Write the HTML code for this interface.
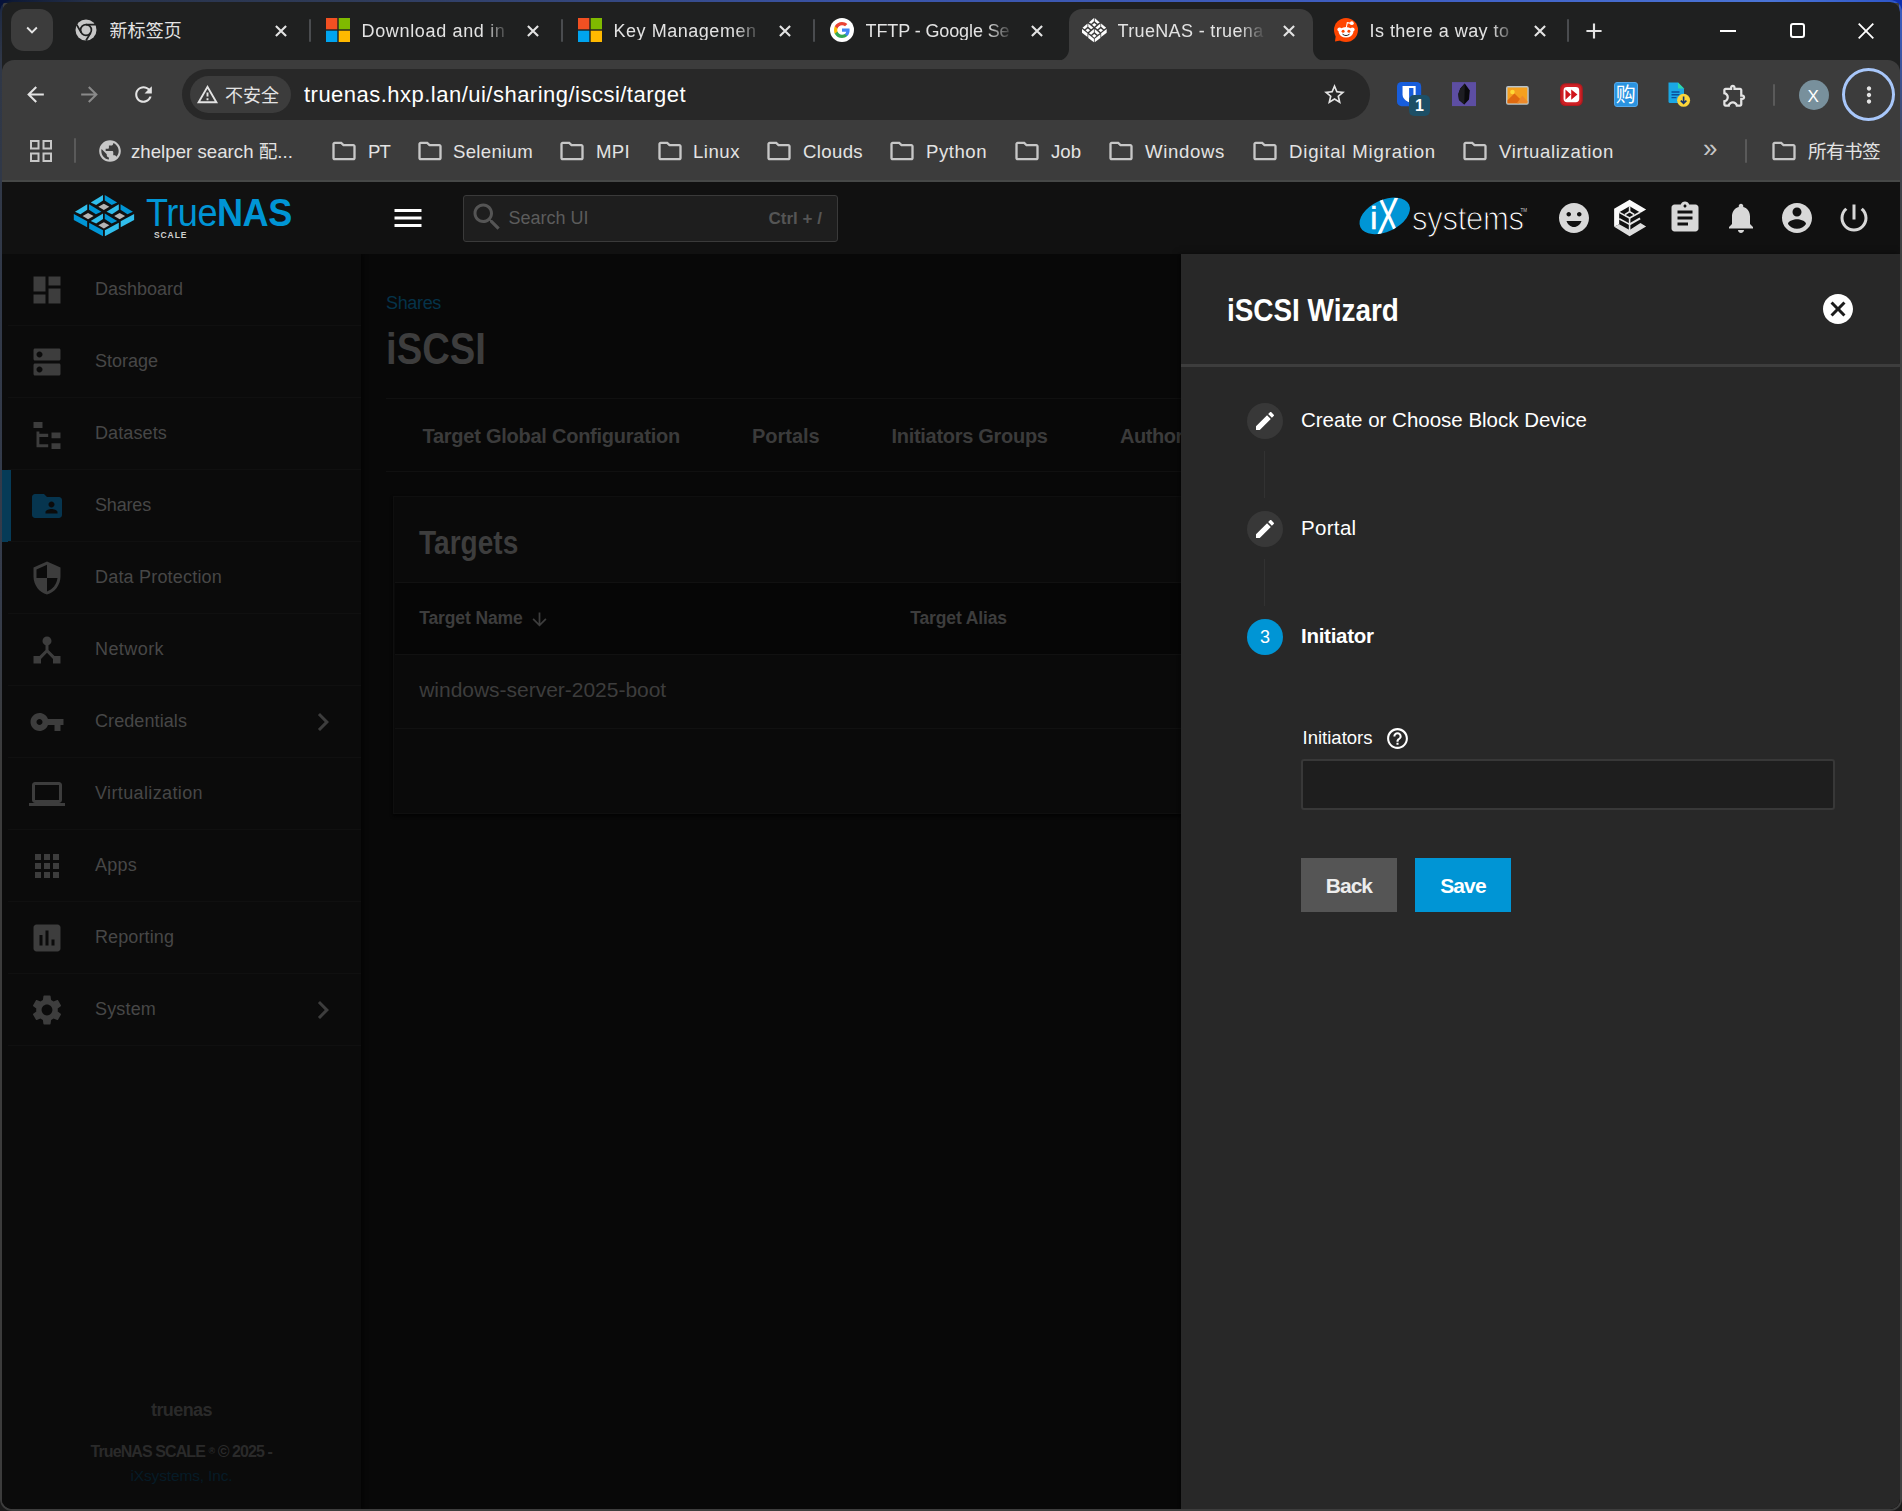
<!DOCTYPE html>
<html lang="zh-CN"><head><meta charset="utf-8"><title>TrueNAS - truenas</title>
<style>
*{box-sizing:border-box;margin:0;padding:0}
html,body{width:1902px;height:1511px;overflow:hidden}
html{background:#1a1a1a}
body{position:relative;font-family:"Liberation Sans","Noto Sans CJK SC",sans-serif;color:#e3e3e3}
.a,.i,.t{position:absolute}
.i{display:block;overflow:visible}
.t{white-space:nowrap;line-height:1;transform:translateY(-50%)}
body{background:linear-gradient(90deg,#06123a 0 50%,#0d2fb0 50% 100%) top/100% 24px no-repeat,#1a1a1a}
#desk{left:0;top:0;width:1902px;height:1511px;border-radius:12px;background:
 linear-gradient(90deg,#0a1633 0%,#27324a 5%,#2f3b58 18%,#3a54a8 45%,#3f5fc4 75%,#4a74d6 93%,#2d55c8 100%) top/100% 3px no-repeat,
 linear-gradient(180deg,#1b2742 0,#2f3747 60px,#353c4b 600px,#3c3c3c 760px,#3c3c3c 100%) left/3px 100% no-repeat,
 linear-gradient(180deg,#3a5cc2 0,#3b58b0 40px,#40434c 160px,#404040 260px,#404040 100%) right/3px 100% no-repeat,
 #3d3d3d}
#win{left:2px;top:2px;width:1898px;height:1507px;border-radius:10px;background:#1f2020;overflow:hidden}
/* chrome ui */
.ct{font-size:18px;color:#e3e3e3}
.bm{font-size:18.6px;color:#e3e3e3}
/* page */
.nav{font-size:18px;color:#474747}
.hd{font-weight:bold;transform-origin:0 50%}
</style></head><body>
<div class="a" id="desk"></div>
<div class="a" id="win">

<div class="a" id="s" style="left:-2px;top:-2px;width:1902px;height:1511px">
<div class="a" style="left:11px;top:9px;width:42px;height:42px;border-radius:13px;background:#3c3c3c"></div>
<svg class="i" style="left:21.0px;top:19.0px;width:22px;height:22px;" viewBox="0 0 24 24"><path fill="#e3e3e3" d="M7.41 8.59L12 13.17l4.59-4.58L18 10l-6 6-6-6 1.41-1.41z"/></svg>
<div class="a" style="left:2px;top:60px;width:1898px;height:121px;background:#3c3c3c;border-radius:12px 12px 0 0"></div>
<div class="a" style="left:1069px;top:9px;width:244px;height:52px;background:#3c3c3c;border-radius:13px 13px 0 0"></div>
<svg class="i" style="left:1057px;top:49px;width:12px;height:12px" viewBox="0 0 12 12"><path fill="#3c3c3c" d="M12 0v12H0C6.600 12 12 6.600 12 0z"/></svg>
<svg class="i" style="left:1313px;top:49px;width:12px;height:12px" viewBox="0 0 12 12"><path fill="#3c3c3c" d="M0 0v12h12C5.400 12 0 6.600 0 0z"/></svg>
<svg class="i" style="left:74.0px;top:18px;width:24px;height:24px" viewBox="0 0 24 24"><circle cx="12" cy="12" r="10.500" fill="#c7c7c7"/><circle cx="12" cy="12" r="5.400" fill="none" stroke="#1f2020" stroke-width="1.700"/><path d="M12 6.600H21.500M7.300 14.700 2.700 6.800M16.700 14.700 12 22.500" stroke="#1f2020" stroke-width="1.700" fill="none"/></svg>
<div class="t ct" style="left:109.5px;top:31px;width:148px;overflow:hidden;;letter-spacing:0.125px;">新标签页</div>
<svg class="i" style="left:275.0px;top:24.500px;width:12px;height:12px" viewBox="0 0 12 12"><path d="M.900.900 11.100 11.100M11.100.900.900 11.100" stroke="#e3e3e3" stroke-width="2.100" fill="none"/></svg>
<svg class="i" style="left:326.0px;top:18px;width:24px;height:24px" viewBox="0 0 24 24"><rect x="0" y="0" width="11.300" height="11.300" fill="#f25022"/><rect x="12.700" y="0" width="11.300" height="11.300" fill="#7fba00"/><rect x="0" y="12.700" width="11.300" height="11.300" fill="#00a4ef"/><rect x="12.700" y="12.700" width="11.300" height="11.300" fill="#ffb900"/></svg>
<div class="t ct" style="left:361.5px;top:31px;width:148px;overflow:hidden;-webkit-mask-image:linear-gradient(90deg,#000 82%,transparent 100%);mask-image:linear-gradient(90deg,#000 82%,transparent 100%);;letter-spacing:0.659px;">Download and in</div>
<svg class="i" style="left:527.0px;top:24.500px;width:12px;height:12px" viewBox="0 0 12 12"><path d="M.900.900 11.100 11.100M11.100.900.900 11.100" stroke="#e3e3e3" stroke-width="2.100" fill="none"/></svg>
<svg class="i" style="left:578.0px;top:18px;width:24px;height:24px" viewBox="0 0 24 24"><rect x="0" y="0" width="11.300" height="11.300" fill="#f25022"/><rect x="12.700" y="0" width="11.300" height="11.300" fill="#7fba00"/><rect x="0" y="12.700" width="11.300" height="11.300" fill="#00a4ef"/><rect x="12.700" y="12.700" width="11.300" height="11.300" fill="#ffb900"/></svg>
<div class="t ct" style="left:613.5px;top:31px;width:148px;overflow:hidden;-webkit-mask-image:linear-gradient(90deg,#000 82%,transparent 100%);mask-image:linear-gradient(90deg,#000 82%,transparent 100%);;letter-spacing:0.531px;">Key Managemen</div>
<svg class="i" style="left:779.0px;top:24.500px;width:12px;height:12px" viewBox="0 0 12 12"><path d="M.900.900 11.100 11.100M11.100.900.900 11.100" stroke="#e3e3e3" stroke-width="2.100" fill="none"/></svg>
<svg class="i" style="left:830.0px;top:18px;width:24px;height:24px" viewBox="0 0 24 24"><circle cx="12" cy="12" r="12" fill="#fff"/><path fill="#4285f4" d="M19.600 12.200c0-.600-.050-1.100-.150-1.600H12v3.100h4.300c-.200 1-.750 1.850-1.600 2.400v2h2.600c1.500-1.400 2.300-3.450 2.300-5.900z"/><path fill="#34a853" d="M12 20c2.150 0 3.950-.700 5.300-1.900l-2.600-2c-.700.480-1.600.770-2.700.770-2.100 0-3.850-1.400-4.500-3.300H4.800v2.070C6.100 18.250 8.850 20 12 20z"/><path fill="#fbbc05" d="M7.500 13.570c-.160-.480-.250-1-.250-1.570s.090-1.090.250-1.570V8.360H4.800C4.300 9.450 4 10.700 4 12s.300 2.550.800 3.640l2.700-2.070z"/><path fill="#ea4335" d="M12 7.130c1.170 0 2.220.400 3.050 1.200l2.300-2.300C15.950 4.750 14.150 4 12 4 8.850 4 6.100 5.750 4.800 8.360l2.700 2.070c.650-1.900 2.400-3.300 4.500-3.300z"/></svg>
<div class="t ct" style="left:865.5px;top:31px;width:148px;overflow:hidden;-webkit-mask-image:linear-gradient(90deg,#000 82%,transparent 100%);mask-image:linear-gradient(90deg,#000 82%,transparent 100%);;letter-spacing:-0.108px;">TFTP - Google Se</div>
<svg class="i" style="left:1031.0px;top:24.500px;width:12px;height:12px" viewBox="0 0 12 12"><path d="M.900.900 11.100 11.100M11.100.900.900 11.100" stroke="#e3e3e3" stroke-width="2.100" fill="none"/></svg>
<svg class="i" style="left:1081.600px;top:17.800px;width:24.700px;height:24.300px" viewBox="185 168 1435 980" preserveAspectRatio="none"><polygon fill="#fff" points="588,345 880,168 880,298 718,402"/><polygon fill="#fff" points="922,168 1216,345 1086,402 922,298"/><polygon fill="#fff" points="900,372 1030,445 900,520 770,445"/><polygon fill="#fff" points="213,565 505,388 505,518 343,622"/><polygon fill="#fff" points="547,388 841,565 711,622 547,518"/><polygon fill="#fff" points="525,592 655,665 525,740 395,665"/><polygon fill="#fff" points="963,565 1255,388 1255,518 1093,622"/><polygon fill="#fff" points="1297,388 1591,565 1461,622 1297,518"/><polygon fill="#fff" points="1275,592 1405,665 1275,740 1145,665"/><polygon fill="#fff" points="588,785 880,608 880,738 718,842"/><polygon fill="#fff" points="922,608 1216,785 1086,842 922,738"/><polygon fill="#fff" points="900,812 1030,885 900,960 770,885"/><polygon fill="#fff" points="185,615 503,788 503,935 185,758"/><polygon fill="#fff" points="550,825 880,1003 880,1148 550,970"/><polygon fill="#fff" points="924,1003 1255,825 1255,970 924,1148"/><polygon fill="#fff" points="1300,788 1620,615 1620,758 1300,935"/></svg>
<div class="t ct" style="left:1117.5px;top:31px;width:148px;overflow:hidden;-webkit-mask-image:linear-gradient(90deg,#000 82%,transparent 100%);mask-image:linear-gradient(90deg,#000 82%,transparent 100%);;letter-spacing:0.351px;">TrueNAS - truena</div>
<svg class="i" style="left:1283.0px;top:24.500px;width:12px;height:12px" viewBox="0 0 12 12"><path d="M.900.900 11.100 11.100M11.100.900.900 11.100" stroke="#e3e3e3" stroke-width="2.100" fill="none"/></svg>
<svg class="i" style="left:1334.0px;top:18px;width:24px;height:24px" viewBox="0 0 24 24"><circle cx="12" cy="12" r="12" fill="#ff4500"/><path fill="#ff4500" d="M2 16 1 23.500 9 22z"/><circle cx="17.800" cy="5.200" r="1.900" fill="#fff"/><path d="M12.300 9.500 13.300 4.600 17.500 5.400" stroke="#fff" stroke-width="1.100" fill="none"/><circle cx="5.600" cy="11.600" r="2.200" fill="#fff"/><circle cx="18.400" cy="11.600" r="2.200" fill="#fff"/><ellipse cx="12" cy="14.300" rx="7.200" ry="5.300" fill="#fff"/><circle cx="9.100" cy="13.300" r="1.500" fill="#ff4500"/><circle cx="14.900" cy="13.300" r="1.500" fill="#ff4500"/><path d="M8.800 16.400c1.900 1.600 4.500 1.600 6.400 0" stroke="#222" stroke-width="1" fill="none" stroke-linecap="round"/></svg>
<div class="t ct" style="left:1369.5px;top:31px;width:148px;overflow:hidden;-webkit-mask-image:linear-gradient(90deg,#000 82%,transparent 100%);mask-image:linear-gradient(90deg,#000 82%,transparent 100%);;letter-spacing:0.466px;">Is there a way to</div>
<svg class="i" style="left:1533.5px;top:24.500px;width:12px;height:12px" viewBox="0 0 12 12"><path d="M.900.900 11.100 11.100M11.100.900.900 11.100" stroke="#e3e3e3" stroke-width="2.100" fill="none"/></svg>
<div class="a" style="left:308.5px;top:19px;width:2px;height:23px;background:#4a4c4f;border-radius:1px"></div>
<div class="a" style="left:560.5px;top:19px;width:2px;height:23px;background:#4a4c4f;border-radius:1px"></div>
<div class="a" style="left:812.5px;top:19px;width:2px;height:23px;background:#4a4c4f;border-radius:1px"></div>
<div class="a" style="left:1567px;top:19px;width:2px;height:23px;background:#4a4c4f;border-radius:1px"></div>
<svg class="i" style="left:1581.0px;top:17.5px;width:26px;height:26px;" viewBox="0 0 24 24"><path fill="#e3e3e3" d="M19 13h-6v6h-2v-6H5v-2h6V5h2v6h6v2z"/></svg>
<div class="a" style="left:1720px;top:30px;width:16px;height:2px;background:#fff"></div>
<div class="a" style="left:1790px;top:23px;width:15px;height:15px;border:2px solid #fff;border-radius:3px"></div>
<svg class="i" style="left:1858px;top:23px;width:16px;height:16px" viewBox="0 0 16 16"><path d="M.700.700 15.300 15.300M15.300.700.700 15.300" stroke="#fff" stroke-width="1.800"/></svg>
<svg class="i" style="left:22.5px;top:82.0px;width:25px;height:25px;" viewBox="0 0 24 24"><path fill="#e3e3e3" d="M20 11H7.830l5.590-5.590L12 4l-8 8 8 8 1.410-1.410L7.830 13H20v-2z"/></svg>
<svg class="i" style="left:76.5px;top:82.0px;width:25px;height:25px;" viewBox="0 0 24 24"><path fill="#8a8a8a" d="M12 4l-1.410 1.410L16.170 11H4v2h12.170l-5.580 5.590L12 20l8-8z"/></svg>
<svg class="i" style="left:130.5px;top:82.0px;width:25px;height:25px;" viewBox="0 0 24 24"><path fill="#e3e3e3" d="M17.650 6.350C16.200 4.900 14.210 4 12 4c-4.420 0-7.990 3.580-7.990 8s3.570 8 7.990 8c3.730 0 6.840-2.550 7.730-6h-2.080c-.820 2.330-3.040 4-5.650 4-3.310 0-6-2.690-6-6s2.690-6 6-6c1.660 0 3.140.690 4.220 1.780L13 11h7V4l-2.350 2.350z"/></svg>
<div class="a" style="left:182px;top:69px;width:1188px;height:51px;border-radius:26px;background:#282828"></div>
<div class="a" style="left:190px;top:76px;width:101px;height:37px;border-radius:19px;background:#3c3c3c"></div>
<svg class="i" style="left:195.8px;top:83.0px;width:23px;height:23px;" viewBox="0 0 24 24"><path fill="#e3e3e3" d="M12 5.990L19.530 19H4.470L12 5.990M12 2L1 21h22L12 2zm1 14h-2v2h2v-2zm0-6h-2v4h2v-4z"/></svg>
<div class="t " style="left:225px;top:96.3px;font-size:18px;color:#e3e3e3">不安全</div>
<div class="t " style="left:304px;top:94.5px;font-size:22px;color:#fff;;letter-spacing:0.482px;">truenas.hxp.lan/ui/sharing/iscsi/target</div>
<svg class="i" style="left:1321.5px;top:82.0px;width:25px;height:25px;" viewBox="0 0 24 24"><path fill="#e3e3e3" d="M22 9.240l-7.190-.620L12 2 9.190 8.630 2 9.240l5.460 4.730L5.820 21 12 17.270 18.180 21l-1.630-7.030L22 9.240zM12 15.400l-3.760 2.270 1-4.280-3.320-2.880 4.380-.380L12 6.100l1.710 4.040 4.380.380-3.320 2.880 1 4.280L12 15.400z"/></svg>
<svg class="i" style="left:1397.300px;top:82.400px;width:24.200px;height:24.200px" viewBox="0 0 24 24"><rect x="0" y="0" width="24" height="24" rx="4.500" fill="#175ddc"/><path fill="#fff" d="M5.500 4h13v8.500c0 3.800-3.200 6.300-6.500 7.700-3.300-1.400-6.500-3.900-6.500-7.700z"/><path fill="#175ddc" d="M12 6h4.300v6.500c0 2.300-2 4-4.300 5.200z"/></svg>
<div class="a" style="left:1409.300px;top:94.500px;width:21px;height:21px;border-radius:5px;background:#1d4f66"></div>
<div class="t " style="left:1415px;top:105.5px;font-size:16px;font-weight:bold;color:#fff">1</div>
<svg class="i" style="left:1451.500px;top:82.400px;width:24px;height:24.200px" viewBox="0 0 24 24"><rect width="24" height="24" fill="#5d4ea3"/><path fill="#0a0a0d" d="M12.800 1.500 17.800 8.500 17 17.500 12.300 22.500 7 17.800 6.300 12 8.300 6.500z"/><path fill="#1d1d22" d="M12.800 1.500 12.300 22.500 7 17.800 6.300 12 8.300 6.500z"/></svg>
<svg class="i" style="left:1506px;top:85.500px;width:22.800px;height:18.800px" viewBox="0 0 23 19"><rect x="0" y="0" width="23" height="19" rx="2" fill="#b9c3ca"/><rect x="1.500" y="1.500" width="20" height="16" fill="#f5a01e"/><path fill="#e06a10" d="M1.500 17.500V14.500L8.500 7.500 15 14 13 17.500z"/><path fill="#ee8a2a" d="M11 17.500 16.500 9.500 21.500 15.500V17.500z"/><circle cx="6.500" cy="6" r="2.300" fill="#fdd835"/></svg>
<svg class="i" style="left:1560.200px;top:82.800px;width:22.800px;height:23.200px" viewBox="0 0 23 23"><rect width="23" height="23" rx="5.500" fill="#b01a1e"/><rect x="1.300" y="1.300" width="20.400" height="20.400" rx="4.500" fill="#cf2025"/><rect x="3.600" y="3.800" width="15.800" height="15.400" rx="3.500" fill="#fff"/><path fill="#d0161c" d="M5.500 6.300 11 11.500 5.500 16.700zM11.300 6.300 17.600 11.500 11.300 16.700z"/></svg>
<div class="a" style="left:1613.600px;top:82.400px;width:24.200px;height:24.200px;border-radius:3px;background:#2a93e0;border:1px solid #55a8ea"></div>
<div class="t " style="left:1615.7px;top:94.8px;font-size:20px;color:#fff">购</div>
<svg class="i" style="left:1667px;top:81px;width:26px;height:28px" viewBox="0 0 26 28"><path fill="#1aa7e4" d="M1.500 1.500h9.500l6 6v13a1.500 1.500 0 0 1-1.500 1.500H3a1.500 1.500 0 0 1-1.500-1.500z"/><path fill="#2fd8a6" d="M11 1.500l6 6h-6z"/><path stroke="#0b4f9a" stroke-width="1.400" d="M4.500 11h8M4.500 13.800h8M4.500 16.600h5"/><circle cx="16.600" cy="19.300" r="6.500" fill="#fbd53a"/><path stroke="#12336e" stroke-width="1.600" fill="none" d="M16.600 15.600v6.500M13.800 19.600l2.800 2.800 2.800-2.800"/></svg>
<svg class="i" style="left:1721.0px;top:81.5px;width:27px;height:27px;" viewBox="0 0 24 24"><path fill="#e3e3e3" d="M10.500 4.500c.280 0 .500.220.500.500v2h6v6h2c.280 0 .500.220.500.500s-.220.500-.500.500h-2v6h-2.120c-.680-1.750-2.390-3-4.380-3s-3.700 1.250-4.380 3H4v-2.120c1.750-.680 3-2.390 3-4.380 0-1.990-1.240-3.700-2.990-4.380L4 7h6V5c0-.280.220-.500.500-.500m0-2C9.120 2.500 8 3.620 8 5H4c-1.100 0-1.990.900-1.990 2v3.800h.290c1.490 0 2.700 1.210 2.700 2.700s-1.210 2.700-2.700 2.700H2V20c0 1.100.900 2 2 2h3.800v-.300c0-1.490 1.210-2.700 2.700-2.700s2.700 1.210 2.700 2.700v.300H17c1.100 0 2-.900 2-2v-4c1.380 0 2.500-1.120 2.500-2.500S20.380 11 19 11V7c0-1.100-.900-2-2-2h-4c0-1.380-1.120-2.500-2.500-2.500z"/></svg>
<div class="a" style="left:1772.500px;top:84px;width:2px;height:22px;background:#5a5a5a;border-radius:1px"></div>
<div class="a" style="left:1799px;top:80px;width:30px;height:30px;border-radius:15px;background:#78909c"></div>
<div class="t " style="left:1807.5px;top:95.5px;font-size:17px;color:#fff">X</div>
<div class="a" style="left:1842px;top:68px;width:53px;height:53px;border-radius:27px;border:3px solid #a8c7fa"></div>
<svg class="i" style="left:1855.5px;top:81.5px;width:26px;height:26px;" viewBox="0 0 24 24"><path fill="#e3e3e3" d="M12 8c1.100 0 2-.900 2-2s-.900-2-2-2-2 .900-2 2 .900 2 2 2zm0 2c-1.100 0-2 .900-2 2s.900 2 2 2 2-.900 2-2-.900-2-2-2zm0 6c-1.100 0-2 .900-2 2s.900 2 2 2 2-.900 2-2-.900-2-2-2z"/></svg>
<svg class="i" style="left:30px;top:140px;width:22px;height:22px" viewBox="0 0 22 22"><g fill="none" stroke="#c7c7c7" stroke-width="2"><rect x="1" y="1" width="7.500" height="7.500"/><rect x="13.500" y="1" width="7.500" height="7.500"/><rect x="1" y="13.500" width="7.500" height="7.500"/><rect x="13.500" y="13.500" width="7.500" height="7.500"/></g></svg>
<div class="a" style="left:74px;top:138px;width:2px;height:25px;background:#5a5a5a;border-radius:1px"></div>
<svg class="i" style="left:97.0px;top:138.0px;width:26px;height:26px;" viewBox="0 0 24 24"><path fill="#c7c7c7" d="M12 2C6.480 2 2 6.480 2 12s4.480 10 10 10 10-4.480 10-10S17.520 2 12 2zm-1 17.930c-3.950-.490-7-3.850-7-7.930 0-.620.080-1.210.210-1.790L9 15v1c0 1.100.900 2 2 2v1.930zm6.900-2.540c-.260-.810-1-1.390-1.900-1.390h-1v-3c0-.550-.450-1-1-1H8v-2h2c.550 0 1-.450 1-1V7h2c1.100 0 2-.900 2-2v-.410c2.930 1.190 5 4.060 5 7.410 0 2.080-.800 3.970-2.100 5.390z"/></svg>
<div class="t bm" style="left:131px;top:151.5px;;letter-spacing:0.041px;">zhelper search 配...</div>
<svg class="i" style="left:330.0px;top:136.5px;width:28px;height:28px;" viewBox="0 0 24 24"><path fill="#c7c7c7" d="M9.170 6l2 2H20v10H4V6h5.170M10 4H4c-1.100 0-1.990.900-1.990 2L2 18c0 1.100.900 2 2 2h16c1.100 0 2-.900 2-2V8c0-1.100-.900-2-2-2h-8l-2-2z"/></svg>
<div class="t bm" style="left:368px;top:151.5px;;letter-spacing:-0.883px;">PT</div>
<svg class="i" style="left:416.0px;top:136.5px;width:28px;height:28px;" viewBox="0 0 24 24"><path fill="#c7c7c7" d="M9.170 6l2 2H20v10H4V6h5.170M10 4H4c-1.100 0-1.990.900-1.990 2L2 18c0 1.100.900 2 2 2h16c1.100 0 2-.900 2-2V8c0-1.100-.900-2-2-2h-8l-2-2z"/></svg>
<div class="t bm" style="left:453px;top:151.5px;;letter-spacing:0.309px;">Selenium</div>
<svg class="i" style="left:558.0px;top:136.5px;width:28px;height:28px;" viewBox="0 0 24 24"><path fill="#c7c7c7" d="M9.170 6l2 2H20v10H4V6h5.170M10 4H4c-1.100 0-1.990.900-1.990 2L2 18c0 1.100.900 2 2 2h16c1.100 0 2-.900 2-2V8c0-1.100-.900-2-2-2h-8l-2-2z"/></svg>
<div class="t bm" style="left:596px;top:151.5px;;letter-spacing:0.312px;">MPI</div>
<svg class="i" style="left:656.0px;top:136.5px;width:28px;height:28px;" viewBox="0 0 24 24"><path fill="#c7c7c7" d="M9.170 6l2 2H20v10H4V6h5.170M10 4H4c-1.100 0-1.990.900-1.990 2L2 18c0 1.100.900 2 2 2h16c1.100 0 2-.900 2-2V8c0-1.100-.900-2-2-2h-8l-2-2z"/></svg>
<div class="t bm" style="left:693px;top:151.5px;;letter-spacing:0.509px;">Linux</div>
<svg class="i" style="left:764.7px;top:136.5px;width:28px;height:28px;" viewBox="0 0 24 24"><path fill="#c7c7c7" d="M9.170 6l2 2H20v10H4V6h5.170M10 4H4c-1.100 0-1.990.900-1.990 2L2 18c0 1.100.900 2 2 2h16c1.100 0 2-.900 2-2V8c0-1.100-.900-2-2-2h-8l-2-2z"/></svg>
<div class="t bm" style="left:803px;top:151.5px;;letter-spacing:0.352px;">Clouds</div>
<svg class="i" style="left:888.0px;top:136.5px;width:28px;height:28px;" viewBox="0 0 24 24"><path fill="#c7c7c7" d="M9.170 6l2 2H20v10H4V6h5.170M10 4H4c-1.100 0-1.990.900-1.990 2L2 18c0 1.100.900 2 2 2h16c1.100 0 2-.900 2-2V8c0-1.100-.900-2-2-2h-8l-2-2z"/></svg>
<div class="t bm" style="left:926px;top:151.5px;;letter-spacing:0.518px;">Python</div>
<svg class="i" style="left:1013.0px;top:136.5px;width:28px;height:28px;" viewBox="0 0 24 24"><path fill="#c7c7c7" d="M9.170 6l2 2H20v10H4V6h5.170M10 4H4c-1.100 0-1.990.900-1.990 2L2 18c0 1.100.900 2 2 2h16c1.100 0 2-.900 2-2V8c0-1.100-.900-2-2-2h-8l-2-2z"/></svg>
<div class="t bm" style="left:1051px;top:151.5px;;letter-spacing:0.005px;">Job</div>
<svg class="i" style="left:1107.0px;top:136.5px;width:28px;height:28px;" viewBox="0 0 24 24"><path fill="#c7c7c7" d="M9.170 6l2 2H20v10H4V6h5.170M10 4H4c-1.100 0-1.990.900-1.990 2L2 18c0 1.100.900 2 2 2h16c1.100 0 2-.900 2-2V8c0-1.100-.900-2-2-2h-8l-2-2z"/></svg>
<div class="t bm" style="left:1145px;top:151.5px;;letter-spacing:0.652px;">Windows</div>
<svg class="i" style="left:1251.0px;top:136.5px;width:28px;height:28px;" viewBox="0 0 24 24"><path fill="#c7c7c7" d="M9.170 6l2 2H20v10H4V6h5.170M10 4H4c-1.100 0-1.990.900-1.990 2L2 18c0 1.100.900 2 2 2h16c1.100 0 2-.900 2-2V8c0-1.100-.900-2-2-2h-8l-2-2z"/></svg>
<div class="t bm" style="left:1289px;top:151.5px;;letter-spacing:0.805px;">Digital Migration</div>
<svg class="i" style="left:1461.0px;top:136.5px;width:28px;height:28px;" viewBox="0 0 24 24"><path fill="#c7c7c7" d="M9.170 6l2 2H20v10H4V6h5.170M10 4H4c-1.100 0-1.990.900-1.990 2L2 18c0 1.100.900 2 2 2h16c1.100 0 2-.900 2-2V8c0-1.100-.900-2-2-2h-8l-2-2z"/></svg>
<div class="t bm" style="left:1499px;top:151.5px;;letter-spacing:0.634px;">Virtualization</div>
<svg class="i" style="left:1770.0px;top:136.5px;width:28px;height:28px;" viewBox="0 0 24 24"><path fill="#c7c7c7" d="M9.170 6l2 2H20v10H4V6h5.170M10 4H4c-1.100 0-1.990.900-1.990 2L2 18c0 1.100.900 2 2 2h16c1.100 0 2-.900 2-2V8c0-1.100-.900-2-2-2h-8l-2-2z"/></svg>
<div class="t bm" style="left:1808px;top:151.5px;;letter-spacing:-0.598px;">所有书签</div>
<div class="t " style="left:1703px;top:148px;font-size:26px;color:#c7c7c7">»</div>
<div class="a" style="left:1745px;top:139px;width:2px;height:24px;background:#5a5a5a;border-radius:1px"></div>
<div class="a" style="left:2px;top:180px;width:1898px;height:2px;background:#464847"></div>
<div class="a" id="page" style="left:2px;top:182px;width:1898px;height:1327px;background:#080808;overflow:hidden">
<div class="a" id="pg" style="left:-2px;top:-182px;width:1902px;height:1511px">
<div class="a" style="left:2px;top:254px;width:359px;height:1256px;background:#0b0b0b;box-shadow:2px 0 4px #040404"></div>
<div class="a" style="left:2px;top:182px;width:1898px;height:72px;background:#111111"></div>
<svg class="i" style="left:29.0px;top:271.5px;width:36px;height:36px;" viewBox="0 0 24 24"><path fill="#3d3d3d" d="M3 13h8V3H3v10zm0 8h8v-6H3v6zm10 0h8V11h-8v10zm0-18v6h8V3h-8z"/></svg>
<div class="t nav" style="left:95px;top:289.0px;;letter-spacing:-0.007px;">Dashboard</div>
<div class="a" style="left:8px;top:325.0px;width:353px;height:1px;background:#101010"></div>
<svg class="i" style="left:29.0px;top:343.5px;width:36px;height:36px;" viewBox="0 0 24 24"><path fill="#3d3d3d" d="M20 13H4c-.55 0-1 .45-1 1v6c0 .55.45 1 1 1h16c.55 0 1-.45 1-1v-6c0-.55-.45-1-1-1zM7 19c-1.1 0-2-.9-2-2s.9-2 2-2 2 .9 2 2-.9 2-2 2zM20 3H4c-.55 0-1 .45-1 1v6c0 .55.45 1 1 1h16c.55 0 1-.45 1-1V4c0-.55-.45-1-1-1zM7 9c-1.1 0-2-.9-2-2s.9-2 2-2 2 .9 2 2-.9 2-2 2z"/></svg>
<div class="t nav" style="left:95px;top:361.0px;;letter-spacing:-0.007px;">Storage</div>
<div class="a" style="left:8px;top:397.0px;width:353px;height:1px;background:#101010"></div>
<svg class="i" style="left:29.0px;top:415.5px;width:36px;height:36px;" viewBox="0 0 24 24"><path fill="#3d3d3d" d="M3 4h6v4H3zM5 10.300h1.900v1.600h5.900v2.100H6.900v4.900h5.900v2H5zM15 11h6v3.800h-6zM15 18.100h6V22h-6z"/></svg>
<div class="t nav" style="left:95px;top:433.0px;;letter-spacing:0.119px;">Datasets</div>
<div class="a" style="left:8px;top:469.0px;width:353px;height:1px;background:#101010"></div>
<div class="a" style="left:2px;top:469.5px;width:9px;height:72px;background:#063b57"></div>
<svg class="i" style="left:29.0px;top:487.5px;width:36px;height:36px;" viewBox="0 0 24 24"><path fill="#06354f" d="M20 6h-8l-2-2H4c-1.1 0-1.99.9-1.99 2L2 18c0 1.1.9 2 2 2h16c1.1 0 2-.9 2-2V8c0-1.1-.9-2-2-2zm-5 3c1.1 0 2 .9 2 2s-.9 2-2 2-2-.9-2-2 .9-2 2-2zm4 8h-8v-1c0-1.33 2.67-2 4-2s4 .67 4 2v1z"/></svg>
<div class="t nav" style="left:95px;top:505.0px;;letter-spacing:-0.174px;">Shares</div>
<div class="a" style="left:8px;top:541.0px;width:353px;height:1px;background:#101010"></div>
<svg class="i" style="left:29.0px;top:559.5px;width:36px;height:36px;" viewBox="0 0 24 24"><path fill="#3d3d3d" d="M12 1L3 5v6c0 5.55 3.84 10.74 9 12 5.16-1.26 9-6.45 9-12V5l-9-4zm0 10.99h7c-.53 4.12-3.28 7.79-7 8.94V12H5V6.3l7-3.11v8.8z"/></svg>
<div class="t nav" style="left:95px;top:577.0px;;letter-spacing:0.195px;">Data Protection</div>
<div class="a" style="left:8px;top:613.0px;width:353px;height:1px;background:#101010"></div>
<svg class="i" style="left:29.0px;top:631.5px;width:36px;height:36px;" viewBox="0 0 24 24"><path fill="#3d3d3d" d="M17 16l-4-4V8.82C14.16 8.4 15 7.3 15 6c0-1.66-1.34-3-3-3S9 4.34 9 6c0 1.3.84 2.4 2 2.82V12l-4 4H3v5h5v-3.05l4-4.2 4 4.2V21h5v-5h-4z"/></svg>
<div class="t nav" style="left:95px;top:649.0px;;letter-spacing:0.426px;">Network</div>
<div class="a" style="left:8px;top:685.0px;width:353px;height:1px;background:#101010"></div>
<svg class="i" style="left:29.0px;top:703.5px;width:36px;height:36px;" viewBox="0 0 24 24"><path fill="#3d3d3d" d="M12.65 10C11.83 7.67 9.61 6 7 6c-3.31 0-6 2.69-6 6s2.69 6 6 6c2.61 0 4.83-1.67 5.65-4H17v4h4v-4h2v-4H12.65zM7 14c-1.1 0-2-.9-2-2s.9-2 2-2 2 .9 2 2-.9 2-2 2z"/></svg>
<div class="t nav" style="left:95px;top:721.0px;;letter-spacing:0.087px;">Credentials</div>
<svg class="i" style="left:305.0px;top:703.5px;width:36px;height:36px;" viewBox="0 0 24 24"><path fill="#3d3d3d" d="M10 6L8.59 7.41 13.17 12l-4.58 4.59L10 18l6-6z"/></svg>
<div class="a" style="left:8px;top:757.0px;width:353px;height:1px;background:#101010"></div>
<svg class="i" style="left:29.0px;top:775.5px;width:36px;height:36px;" viewBox="0 0 24 24"><path fill="#3d3d3d" d="M20 18c1.1 0 1.99-.9 1.99-2L22 6c0-1.1-.9-2-2-2H4c-1.1 0-2 .9-2 2v10c0 1.1.9 2 2 2H0v2h24v-2h-4zM4 6h16v10H4V6z"/></svg>
<div class="t nav" style="left:95px;top:793.0px;;letter-spacing:0.376px;">Virtualization</div>
<div class="a" style="left:8px;top:829.0px;width:353px;height:1px;background:#101010"></div>
<svg class="i" style="left:29.0px;top:847.5px;width:36px;height:36px;" viewBox="0 0 24 24"><path fill="#3d3d3d" d="M4 8h4V4H4v4zm6 12h4v-4h-4v4zm-6 0h4v-4H4v4zm0-6h4v-4H4v4zm6 0h4v-4h-4v4zm6-10v4h4V4h-4zm-6 4h4V4h-4v4zm6 6h4v-4h-4v4zm0 6h4v-4h-4v4z"/></svg>
<div class="t nav" style="left:95px;top:865.0px;;letter-spacing:0.242px;">Apps</div>
<div class="a" style="left:8px;top:901.0px;width:353px;height:1px;background:#101010"></div>
<svg class="i" style="left:29.0px;top:919.5px;width:36px;height:36px;" viewBox="0 0 24 24"><path fill="#3d3d3d" d="M19 3H5c-1.1 0-2 .9-2 2v14c0 1.1.9 2 2 2h14c1.1 0 2-.9 2-2V5c0-1.1-.9-2-2-2zM9 17H7v-7h2v7zm4 0h-2V7h2v10zm4 0h-2v-4h2v4z"/></svg>
<div class="t nav" style="left:95px;top:937.0px;;letter-spacing:0.106px;">Reporting</div>
<div class="a" style="left:8px;top:973.0px;width:353px;height:1px;background:#101010"></div>
<svg class="i" style="left:29.0px;top:991.5px;width:36px;height:36px;" viewBox="0 0 24 24"><path fill="#3d3d3d" d="M19.14 12.94c.04-.3.06-.61.06-.94 0-.32-.02-.64-.07-.94l2.03-1.58c.18-.14.23-.41.12-.61l-1.92-3.32c-.12-.22-.37-.29-.59-.22l-2.39.96c-.5-.38-1.03-.7-1.62-.94l-.36-2.54c-.04-.24-.24-.41-.48-.41h-3.84c-.24 0-.43.17-.47.41l-.36 2.54c-.59.24-1.13.57-1.62.94l-2.39-.96c-.22-.08-.47 0-.59.22L2.74 8.87c-.12.21-.08.47.12.61l2.03 1.58c-.05.3-.09.63-.09.94s.02.64.07.94l-2.03 1.58c-.18.14-.23.41-.12.61l1.92 3.32c.12.22.37.29.59.22l2.39-.96c.5.38 1.03.7 1.62.94l.36 2.54c.05.24.24.41.48.41h3.84c.24 0 .44-.17.47-.41l.36-2.54c.59-.24 1.13-.56 1.62-.94l2.39.96c.22.08.47 0 .59-.22l1.92-3.32c.12-.22.07-.47-.12-.61l-2.01-1.58zM12 15.6c-1.98 0-3.6-1.62-3.6-3.6s1.62-3.6 3.6-3.6 3.6 1.62 3.6 3.6-1.62 3.6-3.6 3.6z"/></svg>
<div class="t nav" style="left:95px;top:1009.0px;;letter-spacing:0.164px;">System</div>
<svg class="i" style="left:305.0px;top:991.5px;width:36px;height:36px;" viewBox="0 0 24 24"><path fill="#3d3d3d" d="M10 6L8.59 7.41 13.17 12l-4.58 4.59L10 18l6-6z"/></svg>
<div class="a" style="left:8px;top:1045.0px;width:353px;height:1px;background:#101010"></div>
<div class="t " style="left:151px;top:1410px;font-size:18px;color:#2a2a2a;font-weight:bold;letter-spacing:-0.576px;">truenas</div>
<div class="t " style="left:90.5px;top:1452px;font-size:16px;color:#2a2a2a;font-weight:bold;letter-spacing:-0.911px;">TrueNAS SCALE <span style="font-size:9px;vertical-align:3px">®</span> © 2025 -</div>
<div class="t " style="left:130.5px;top:1476px;font-size:15.500px;color:#061b27;letter-spacing:-0.148px;">iXsystems, Inc.</div>
<svg class="i" style="left:66px;top:188px;width:80px;height:56px" viewBox="0 0 1902 1331"><polygon fill="#31beec" points="588,345 880,168 880,298 718,402"/><polygon fill="#0095d5" points="922,168 1216,345 1086,402 922,298"/><polygon fill="#b4b4b4" points="900,372 1030,445 900,520 770,445"/><polygon fill="#31beec" points="213,565 505,388 505,518 343,622"/><polygon fill="#0095d5" points="547,388 841,565 711,622 547,518"/><polygon fill="#b4b4b4" points="525,592 655,665 525,740 395,665"/><polygon fill="#31beec" points="963,565 1255,388 1255,518 1093,622"/><polygon fill="#0095d5" points="1297,388 1591,565 1461,622 1297,518"/><polygon fill="#b4b4b4" points="1275,592 1405,665 1275,740 1145,665"/><polygon fill="#31beec" points="588,785 880,608 880,738 718,842"/><polygon fill="#0095d5" points="922,608 1216,785 1086,842 922,738"/><polygon fill="#b4b4b4" points="900,812 1030,885 900,960 770,885"/><polygon fill="#0095d5" points="185,615 503,788 503,935 185,758"/><polygon fill="#0095d5" points="550,825 880,1003 880,1148 550,970"/><polygon fill="#31beec" points="924,1003 1255,825 1255,970 924,1148"/><polygon fill="#31beec" points="1300,788 1620,615 1620,758 1300,935"/></svg>
<div class="t" style="left:146px;top:212.500px;font-size:38px;color:#0095d5;letter-spacing:-.5px;transform-origin:0 50%;transform:translateY(-50%) scaleX(.95)"><span style="font-weight:normal">True</span><span style="font-weight:bold">NAS</span></div>
<div class="t " style="left:154px;top:235px;font-size:8.500px;font-weight:bold;color:#d0d0d0;letter-spacing:.9px">SCALE</div>
<svg class="i" style="left:390.0px;top:200.0px;width:36px;height:36px;" viewBox="0 0 24 24"><path fill="#fff" d="M3 18h18v-2H3v2zm0-5h18v-2H3v2zm0-7v2h18V6H3z"/></svg>
<div class="a" style="left:463px;top:194.500px;width:375px;height:47px;background:#1e1e1e;border:1px solid #3a3a3a;border-radius:3px"></div>
<svg class="i" style="left:469.4px;top:199.4px;width:36px;height:36px;" viewBox="0 0 24 24"><path fill="#555" d="M15.5 14h-.79l-.28-.27C15.41 12.59 16 11.11 16 9.5 16 5.91 13.09 3 9.5 3S3 5.91 3 9.5 5.91 16 9.5 16c1.61 0 3.09-.59 4.23-1.57l.27.28v.79l5 4.99L20.49 19l-4.99-5zm-6 0C7.01 14 5 11.99 5 9.5S7.01 5 9.5 5 14 7.01 14 9.5 11.99 14 9.5 14z"/></svg>
<div class="t " style="left:508.5px;top:217.5px;font-size:18px;color:#5c5c5c">Search UI</div>
<div class="t " style="left:768.5px;top:217.5px;font-size:17px;font-weight:bold;color:#555">Ctrl + /</div>
<svg class="i" style="left:1350px;top:190px;width:80px;height:54px" viewBox="0 0 1902 1284">
<defs><clipPath id="ixc"><ellipse cx="825" cy="615" rx="638" ry="376" transform="rotate(-25 825 615)"/></clipPath></defs>
<ellipse cx="825" cy="615" rx="638" ry="376" transform="rotate(-25 825 615)" fill="#0095d5"/>
<text x="565" y="922" text-anchor="middle" font-family="Liberation Sans, sans-serif" font-size="760" fill="#fff" stroke="#fff" stroke-width="14">i</text>
<g clip-path="url(#ixc)"><text transform="translate(905 1047) scale(.66 1)" x="0" y="0" text-anchor="middle" font-family="Liberation Sans, sans-serif" font-size="1215" fill="#fff">X</text></g>
</svg>
<div class="t " style="left:1412px;top:217.5px;font-size:33px;color:#fff;letter-spacing:-.3px;font-weight:normal;-webkit-text-stroke:1.100px #111;transform-origin:0 50%;transform:translateY(-50%) scaleX(.94)">systems</div>
<div class="t " style="left:1520.5px;top:211px;font-size:4.500px;color:#ccc">TM</div>
<svg class="i" style="left:1556.0px;top:199.5px;width:36px;height:36px;" viewBox="0 0 24 24"><path fill="#d8d8d8" d="M11.99 2C6.47 2 2 6.48 2 12s4.47 10 9.99 10C17.52 22 22 17.52 22 12S17.52 2 11.99 2zM8.5 8c.83 0 1.5.67 1.5 1.5S9.33 11 8.5 11 7 10.33 7 9.5 7.67 8 8.5 8zM12 18c-2.28 0-4.22-1.66-5-4h10c-.78 2.34-2.72 4-5 4zm3.500-7c-.83 0-1.5-.67-1.5-1.5S14.67 8 15.5 8s1.500.67 1.500 1.500-.67 1.500-1.500 1.500z"/></svg>
<svg class="i" style="left:1667.0px;top:199.5px;width:36px;height:36px;" viewBox="0 0 24 24"><path fill="#d8d8d8" d="M19 3h-4.18C14.400 1.840 13.300 1 12 1c-1.300 0-2.400.840-2.820 2H5c-1.100 0-2 .900-2 2v14c0 1.100.900 2 2 2h14c1.100 0 2-.900 2-2V5c0-1.100-.900-2-2-2zm-7 0c.550 0 1 .450 1 1s-.450 1-1 1-1-.450-1-1 .450-1 1-1zm2 14H7v-2h7v2zm3-4H7v-2h10v2zm0-4H7V7h10v2z"/></svg>
<svg class="i" style="left:1722.5px;top:199.5px;width:36px;height:36px;" viewBox="0 0 24 24"><path fill="#d8d8d8" d="M12 22c1.100 0 2-.900 2-2h-4c0 1.100.890 2 2 2zm6-6v-5c0-3.070-1.640-5.640-4.500-6.320V4c0-.830-.670-1.500-1.500-1.500s-1.500.670-1.500 1.500v.680C7.630 5.360 6 7.920 6 11v5l-2 2v1h16v-1l-2-2z"/></svg>
<svg class="i" style="left:1779.3px;top:199.5px;width:36px;height:36px;" viewBox="0 0 24 24"><path fill="#d8d8d8" d="M12 2C6.480 2 2 6.480 2 12s4.480 10 10 10 10-4.480 10-10S17.520 2 12 2zm0 3c1.660 0 3 1.340 3 3s-1.340 3-3 3-3-1.340-3-3 1.340-3 3-3zm0 14.200c-2.500 0-4.710-1.280-6-3.220.030-1.990 4-3.080 6-3.080 1.990 0 5.970 1.090 6 3.080-1.290 1.940-3.500 3.220-6 3.220z"/></svg>
<svg class="i" style="left:1836.4px;top:199.5px;width:36px;height:36px;" viewBox="0 0 24 24"><path fill="#d8d8d8" d="M13 3h-2v10h2V3zm4.830 2.170l-1.420 1.420C17.990 7.860 19 9.810 19 12c0 3.870-3.130 7-7 7s-7-3.130-7-7c0-2.190 1.010-4.140 2.580-5.420L6.170 5.170C4.230 6.820 3 9.260 3 12c0 4.970 4.030 9 9 9s9-4.030 9-9c0-2.740-1.230-5.180-3.170-6.830z"/></svg>
<svg class="i" style="left:1600px;top:192px;width:60px;height:52px" viewBox="0 0 1743 1511">
<polygon fill="#fafafa" points="410,490 860,225 1340,510 1180,602 860,415 557,592 557,940 410,1010"/>
<polygon fill="#dedede" points="410,1010 557,938 860,1105 1175,900 1340,1000 860,1285"/>
<g fill="none" stroke="#e6e6e6" stroke-width="46">
<path d="M860 415V585M860 735V1105"/>
<path d="M557 592 860 757 1165 588"/>
<path d="M728 655 860 572 992 655"/>
<path d="M557 778 860 942"/>
</g>
<path d="M860 942 1165 768" fill="none" stroke="#e6e6e6" stroke-width="62"/>
</svg>
<div class="t " style="left:386px;top:303px;font-size:18px;color:#05334a;letter-spacing:-0.341px;">Shares</div>
<div class="t hd" style="left:386px;top:348px;font-size:45px;color:#3d3d3d;transform:translateY(-50%) scaleX(.85)">iSCSI</div>
<div class="a" style="left:386px;top:398px;width:796px;height:1px;background:#101010"></div>
<div class="a" style="left:386px;top:471px;width:796px;height:1px;background:#101010"></div>
<div class="t " style="left:422.4px;top:436px;font-size:20px;font-weight:bold;color:#3b3b3b;;letter-spacing:-0.243px;">Target Global Configuration</div>
<div class="t " style="left:752px;top:436px;font-size:20px;font-weight:bold;color:#3b3b3b;;letter-spacing:-0.030px;">Portals</div>
<div class="t " style="left:891.5px;top:436px;font-size:20px;font-weight:bold;color:#3b3b3b;;letter-spacing:-0.290px;">Initiators Groups</div>
<div class="t " style="left:1120px;top:436px;font-size:20px;font-weight:bold;color:#3b3b3b;;letter-spacing:-0.430px;">Authorized Access</div>
<div class="a" style="left:392.800px;top:495.500px;width:800px;height:318.500px;background:#0a0a0a;border:1.500px solid #0f0f0f;box-shadow:0 2px 3px #030303"></div>
<div class="a" style="left:394.500px;top:582px;width:800px;height:73px;background:#060606;border-top:1px solid #111;border-bottom:1px solid #111"></div>
<div class="a" style="left:394.500px;top:727.500px;width:800px;height:1px;background:#111"></div>
<div class="t hd" style="left:419px;top:542.200px;font-size:33px;color:#3d3d3d;transform:translateY(-50%) scaleX(.85)">Targets</div>
<div class="t " style="left:419.2px;top:619px;font-size:17.500px;font-weight:bold;color:#3d3d3d;;letter-spacing:-0.111px;">Target Name</div>
<svg class="i" style="left:529.2px;top:608.5px;width:21px;height:21px;" viewBox="0 0 24 24"><path fill="#3d3d3d" d="M20 12l-1.410-1.410L13 16.170V4h-2v12.170l-5.580-5.590L4 12l8 8 8-8z"/></svg>
<div class="t " style="left:910.2px;top:619px;font-size:17.500px;font-weight:bold;color:#3d3d3d;;letter-spacing:-0.120px;">Target Alias</div>
<div class="t " style="left:419.2px;top:689px;font-size:21px;color:#3d3d3d;letter-spacing:-0.019px;">windows-server-2025-boot</div>
<div class="a" style="left:1181px;top:254px;width:719px;height:1257px;background:#282828;box-shadow:-2px 0 6px rgba(0,0,0,.5)">
</div>
<div class="t hd" style="left:1227px;top:309.500px;font-size:31px;color:#fff;transform:translateY(-50%) scaleX(.9)">iSCSI Wizard</div>
<div class="a" style="left:1823px;top:294px;width:30px;height:30px;border-radius:15px;background:#1c1c1c"></div>
<svg class="i" style="left:1820.0px;top:291.0px;width:36px;height:36px;" viewBox="0 0 24 24"><path fill="#fff" d="M12 2C6.470 2 2 6.470 2 12s4.470 10 10 10 10-4.470 10-10S17.530 2 12 2zm5 13.590L15.590 17 12 13.410 8.410 17 7 15.590 10.590 12 7 8.410 8.410 7 12 10.590 15.590 7 17 8.410 13.410 12 17 15.590z"/></svg>
<div class="a" style="left:1181px;top:364.200px;width:719px;height:2.600px;background:#3d3d3d"></div>
<div class="a" style="left:1246.8px;top:402.7px;width:36px;height:36px;border-radius:18px;background:#383838"></div>
<svg class="i" style="left:1252.8px;top:408.7px;width:24px;height:24px;" viewBox="0 0 24 24"><path fill="#fff" d="M3 17.250V21h3.750L17.810 9.940l-3.750-3.750L3 17.250zM20.710 7.040c.390-.390.390-1.020 0-1.410l-2.340-2.340c-.390-.390-1.020-.390-1.410 0l-1.830 1.830 3.750 3.750 1.830-1.830z"/></svg>
<div class="a" style="left:1246.8px;top:510.5px;width:36px;height:36px;border-radius:18px;background:#383838"></div>
<svg class="i" style="left:1252.8px;top:516.5px;width:24px;height:24px;" viewBox="0 0 24 24"><path fill="#fff" d="M3 17.250V21h3.750L17.810 9.940l-3.750-3.750L3 17.250zM20.710 7.040c.390-.390.390-1.020 0-1.410l-2.340-2.340c-.390-.390-1.020-.390-1.410 0l-1.830 1.830 3.750 3.750 1.830-1.830z"/></svg>
<div class="a" style="left:1264.300px;top:451.400px;width:1px;height:47px;background:#323232"></div>
<div class="a" style="left:1264.300px;top:559px;width:1px;height:47px;background:#323232"></div>
<div class="t " style="left:1301px;top:420px;font-size:20.500px;color:#fff;letter-spacing:-0.007px;">Create or Choose Block Device</div>
<div class="t " style="left:1301px;top:528px;font-size:20.500px;color:#fff;letter-spacing:0.323px;">Portal</div>
<div class="a" style="left:1246.800px;top:618.800px;width:36px;height:36px;border-radius:18px;background:#0095d5"></div>
<div class="t " style="left:1260px;top:636.8px;font-size:18px;color:#fff">3</div>
<div class="t " style="left:1301px;top:635.5px;font-size:20.500px;color:#fff;font-weight:bold;;letter-spacing:-0.275px;">Initiator</div>
<div class="t " style="left:1302.5px;top:738px;font-size:18.500px;color:#fff;letter-spacing:0.008px;">Initiators</div>
<svg class="i" style="left:1384.5px;top:726.0px;width:25px;height:25px;" viewBox="0 0 24 24"><path fill="#fff" d="M11 18h2v-2h-2v2zm1-16C6.480 2 2 6.480 2 12s4.480 10 10 10 10-4.480 10-10S17.520 2 12 2zm0 18c-4.410 0-8-3.590-8-8s3.590-8 8-8 8 3.590 8 8-3.590 8-8 8zm0-14c-2.210 0-4 1.790-4 4h2c0-1.100.900-2 2-2s2 .900 2 2c0 2-3 1.750-3 5h2c0-2.250 3-2.500 3-5 0-2.210-1.790-4-4-4z"/></svg>
<div class="a" style="left:1301px;top:758.500px;width:534px;height:51px;background:#1e1e1e;border:2px solid #383838;border-radius:3px"></div>
<div class="a" style="left:1301px;top:858px;width:96px;height:54px;background:#555"></div>
<div class="t " style="left:1325.8px;top:884.8px;font-size:21px;font-weight:bold;color:#ededed;;letter-spacing:-1.001px;">Back</div>
<div class="a" style="left:1415px;top:858px;width:96px;height:54px;background:#0095d5"></div>
<div class="t " style="left:1440.2px;top:884.8px;font-size:21px;font-weight:bold;color:#fff;;letter-spacing:-0.887px;">Save</div>
</div></div>
</div></div>
</body></html>
